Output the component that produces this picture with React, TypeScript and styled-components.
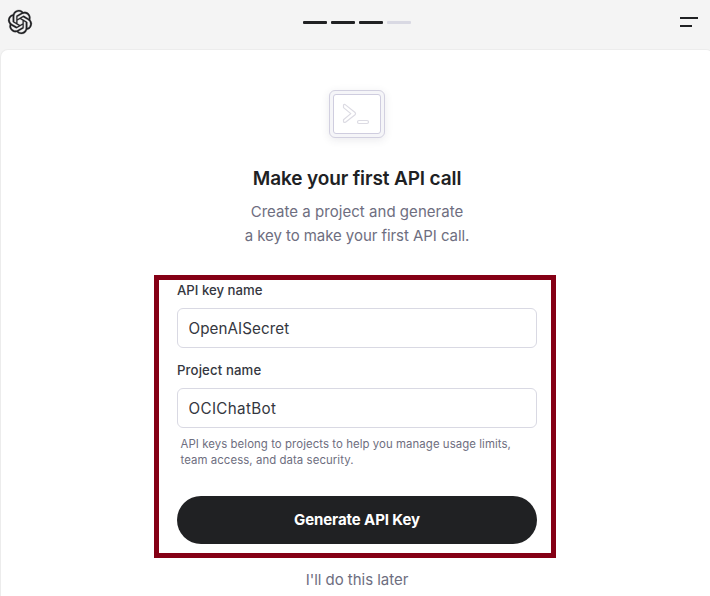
import React from "react";
import styled, { createGlobalStyle } from "styled-components";
import { SiOpenai } from "react-icons/si";

const GlobalStyle = createGlobalStyle`
  * { box-sizing: border-box; }
  html, body { margin: 0; padding: 0; background: #f4f4f4; overflow: hidden; }
  body { font-family: Inter, "Liberation Sans", sans-serif; color: #202123; }
`;

const Page = styled.div`
  height: 596px;
  display: flex;
  flex-direction: column;
  overflow: hidden;
`;

const Header = styled.header`
  flex: none;
  height: 49px;
  padding: 0 4px 5px 8px;
  display: grid;
  grid-template-columns: 1fr auto 1fr;
  align-items: center;
`;

const Logo = styled(SiOpenai)`
  width: 24px;
  height: 24px;
  color: #202123;
  stroke: #202123;
  stroke-width: 0.25px;
  overflow: visible;
`;

const Steps = styled.div`
  display: flex;
  gap: 4px;
  margin-top: 1px;
`;

const Step = styled.span<{ $done?: boolean }>`
  width: 24px;
  height: 3px;
  border-radius: 1px;
  background: ${(p) => (p.$done ? "#202123" : "#d9d9e3")};
`;

const MenuButton = styled.button`
  justify-self: end;
  width: 18px;
  margin-right: 8px;
  padding: 0;
  border: 0;
  background: none;
  display: flex;
  flex-direction: column;
  gap: 6px;
`;

const MenuLine = styled.span<{ $width: number }>`
  width: ${(p) => p.$width}px;
  height: 2px;
  background: #202123;
`;

const Panel = styled.main`
  flex: 1;
  margin-right: -4px;
  padding-top: 40px;
  display: flex;
  flex-direction: column;
  align-items: center;
  background: #fff;
  border: 1px solid #ececec;
  border-bottom: 0;
  border-radius: 8px 8px 0 0;
`;

const Terminal = styled.div`
  flex: none;
  width: 56px;
  height: 48px;
  padding: 3px;
  border: 1px solid #d2d0e0;
  border-radius: 6px;
  background: #f5f5f8;
  box-shadow: 0 2px 8px rgba(50, 50, 80, 0.1);
`;

const Screen = styled.div`
  height: 40px;
  border: 1px solid #cfcddf;
  border-radius: 3px;
  background: #fff;

  svg { display: block; }
`;

const Title = styled.h1`
  margin: 27px 0 0;
  font-size: 19px;
  line-height: 28px;
  font-weight: 600;
  letter-spacing: -0.12px;
`;

const Intro = styled.p`
  margin: 7px 0 0;
  font-size: 15px;
  line-height: 24px;
  text-align: center;
  color: #6e6e80;
`;

const IntroLine = styled.span<{ $tracking: number }>`
  display: block;
  letter-spacing: ${(p) => p.$tracking}px;
`;

const Form = styled.form`
  position: relative;
  width: 360px;
  margin-top: 34px;
  display: flex;
  flex-direction: column;
`;

const Highlight = styled.div`
  position: absolute;
  top: -7px;
  left: -23px;
  width: 402px;
  height: 283px;
  border: 5px solid #850015;
  pointer-events: none;
`;

const Label = styled.label<{ $tracking?: number }>`
  height: 16px;
  margin-bottom: 10px;
  font-size: 13.2px;
  line-height: 16px;
  font-weight: 500;
  letter-spacing: ${(p) => p.$tracking ?? 0}px;
  color: #353740;
`;

const Field = styled.input<{ $tracking?: number }>`
  width: 100%;
  height: 40px;
  margin-bottom: 14px;
  padding: 0 10.5px;
  border: 1px solid #d9d9e3;
  border-radius: 6px;
  background: #fff;
  font: 400 15.2px Inter, "Liberation Sans", sans-serif;
  letter-spacing: ${(p) => p.$tracking ?? 0}px;
  color: #353740;
  outline: none;
`;

const Hint = styled.p`
  margin: -6px 0 0 3.5px;
  font-size: 11.4px;
  line-height: 16px;
  letter-spacing: 0.07px;
  color: #6e6e80;
  white-space: nowrap;
`;

const Submit = styled.button`
  height: 48px;
  margin-top: 28px;
  padding: 0 0 2px;
  border: 0;
  border-radius: 24px;
  background: #202123;
  color: #fff;
  font: 700 15px Inter, "Liberation Sans", sans-serif;
  letter-spacing: -0.1px;
`;

const Later = styled.a`
  margin-top: 24px;
  font-size: 15px;
  line-height: 24px;
  letter-spacing: -0.03px;
  color: #6e6e80;
`;

export default function App() {
  return (
    <Page>
      <GlobalStyle />
      <Header>
        <Logo />
        <Steps>
          <Step $done />
          <Step $done />
          <Step $done />
          <Step />
        </Steps>
        <MenuButton aria-label="Menu">
          <MenuLine $width={18} />
          <MenuLine $width={12} />
        </MenuButton>
      </Header>
      <Panel>
        <Terminal>
          <Screen>
            <svg width="46" height="38" viewBox="0 0 46 38" fill="#fff" stroke="#dcdbe3" strokeWidth="1.2" strokeLinejoin="round">
              <path d="M9.5 10.5Q9.5 9 11.2 9.6L20.8 17.2Q22.3 18.6 20.8 20L11.5 27.2Q9.5 28 9.5 26.3V24.8L16.8 18.6L9.5 12.6Z" />
              <rect x="23.5" y="25.5" width="11" height="3" rx="1.5" />
            </svg>
          </Screen>
        </Terminal>
        <Title>Make your first API call</Title>
        <Intro>
          <IntroLine $tracking={0.04}>Create a project and generate</IntroLine>
          <IntroLine $tracking={-0.06}>a key to make your first API call.</IntroLine>
        </Intro>
        <Form onSubmit={(e) => e.preventDefault()}>
          <Label htmlFor="key">API key name</Label>
          <Field id="key" defaultValue="OpenAISecret" $tracking={0.08} />
          <Label htmlFor="project" $tracking={0.12}>Project name</Label>
          <Field id="project" defaultValue="OCIChatBot" $tracking={0.35} />
          <Hint>
            API keys belong to projects to help you manage usage limits,
            <br />
            team access, and data security.
          </Hint>
          <Submit type="submit">Generate API Key</Submit>
          <Highlight />
        </Form>
        <Later>I'll do this later</Later>
      </Panel>
    </Page>
  );
}
